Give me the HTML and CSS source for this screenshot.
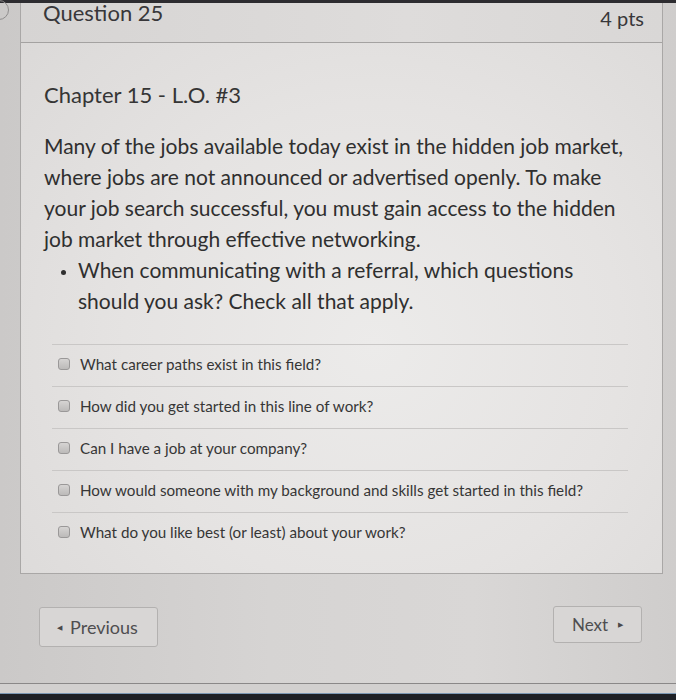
FILE: index.html
```html
<!DOCTYPE html>
<html lang="en">
<head>
<meta charset="utf-8">
<title>Question 25</title>
<link rel="stylesheet" href="styles.css">
</head>
<body>
<div class="topbar"></div>
<div class="page">
  <span class="round"></span>
  <section class="question">
    <header class="q-header">
      <h2 class="q-title">Question 25</h2>
      <span class="pts">4 pts</span>
    </header>
    <div class="q-body">
      <p class="chapter">Chapter 15 - L.O. #3</p>
      <p class="text">Many of the jobs available today exist in the hidden job market, where jobs are not announced or advertised openly. To make your job search successful, you must gain access to the hidden job market through effective networking.</p>
      <ul class="bullets">
        <li>When communicating with a referral, which questions should you ask? Check all that apply.</li>
      </ul>
      <div class="answers">
        <label class="answer"><span class="check"></span>What career paths exist in this field?</label>
        <label class="answer"><span class="check"></span>How did you get started in this line of work?</label>
        <label class="answer"><span class="check"></span>Can I have a job at your company?</label>
        <label class="answer"><span class="check"></span>How would someone with my background and skills get started in this field?</label>
        <label class="answer"><span class="check"></span>What do you like best (or least) about your work?</label>
      </div>
    </div>
  </section>
  <nav class="pager">
    <button class="btn btn-prev"><span class="tri">&#9664;</span>Previous</button>
    <button class="btn btn-next">Next<span class="tri">&#9654;</span></button>
  </nav>
</div>
<div class="bottom-strip"></div>
<div class="taskbar"></div>
</body>
</html>
```
FILE: styles.css
```css
* { box-sizing: border-box; }
html, body {
  margin: 0;
  padding: 0;
}
body {
  width: 676px;
  height: 700px;
  overflow: hidden;
  background: #cfcdcc;
  font-family: Lato, "Open Sans", "Liberation Sans", sans-serif;
  color: #363636;
}
.topbar {
  height: 3px;
  background: #2d2c30;
}
.page {
  position: relative;
  padding: 0 13px 0 20px;
  background: linear-gradient(90deg, #cbc9c8 0%, #d6d4d3 40%, #d9d7d6 70%, #cfcdcc 100%);
}
.round {
  position: absolute;
  left: -11px;
  top: -3px;
  width: 20px;
  height: 20px;
  border: 1px solid #8f8d8d;
  border-radius: 50%;
}
.question {
  border: 1px solid #a9a7a6;
  border-top: none;
  background: radial-gradient(ellipse at 55% 60%, #ecebea 0%, #e5e3e2 50%, #dad8d7 100%);
}
.q-header {
  height: 40px;
  display: flex;
  justify-content: space-between;
  align-items: flex-start;
  padding: 0 18px 0 22px;
  background: linear-gradient(90deg, #d6d4d3, #dedcdb 60%, #d9d7d6);
  border-bottom: 1px solid #a4a2a1;
}
.q-title {
  margin: -3px 0 0;
  font-size: 22px;
  font-weight: 400;
  line-height: 26px;
  color: #38373a;
}
.pts {
  margin-top: 3px;
  font-size: 20px;
  line-height: 24px;
  color: #38373a;
}
.q-body {
  padding: 40px 26px 19px 23px;
}
.chapter {
  margin: 0;
  font-size: 22px;
  line-height: 24px;
  color: #353535;
}
.text {
  margin: 23px 0 0;
  font-size: 21px;
  line-height: 31px;
  color: #2f2f2f;
}
.bullets {
  margin: 0;
  padding-left: 34px;
  font-size: 21px;
  line-height: 31px;
  color: #2f2f2f;
}
.bullets li::marker {
  font-size: 15px;
}
.answers {
  margin: 28px 8px 0 8px;
}
.answer {
  display: flex;
  align-items: center;
  gap: 10px;
  height: 42px;
  padding: 0 0 4px 6px;
  border-top: 1px solid #c9c7c6;
  font-size: 15.2px;
  color: #363636;
}
.check {
  flex: none;
  width: 12px;
  height: 12px;
  border: 1px solid #9a9898;
  border-radius: 3px;
  background: linear-gradient(#d6d4d3, #bcbab9);
}
.pager {
  display: flex;
  justify-content: space-between;
  align-items: flex-start;
  padding: 33px 21px 36px 19px;
}
.btn {
  display: flex;
  align-items: center;
  justify-content: center;
  gap: 8px;
  font-family: Lato, "Open Sans", "Liberation Sans", sans-serif;
  font-size: 17px;
  color: #4f4e50;
  background: #d8d6d5;
  border: 1px solid #b3b1b0;
  border-radius: 3px;
  padding: 0;
}
.btn-prev {
  width: 119px;
  height: 40px;
  padding-right: 2px;
  font-size: 18px;
}
.btn-next {
  width: 89px;
  height: 37px;
  margin-top: -1px;
  gap: 10px;
}
.tri {
  font-size: 7px;
  color: #4a494b;
}
.bottom-strip {
  height: 11px;
  border-top: 1px solid #8a8888;
  background: #d2d0cf;
  border-bottom: 1px solid #7c98b4;
}
.taskbar {
  height: 20px;
  background: #1e2126;
}
```
